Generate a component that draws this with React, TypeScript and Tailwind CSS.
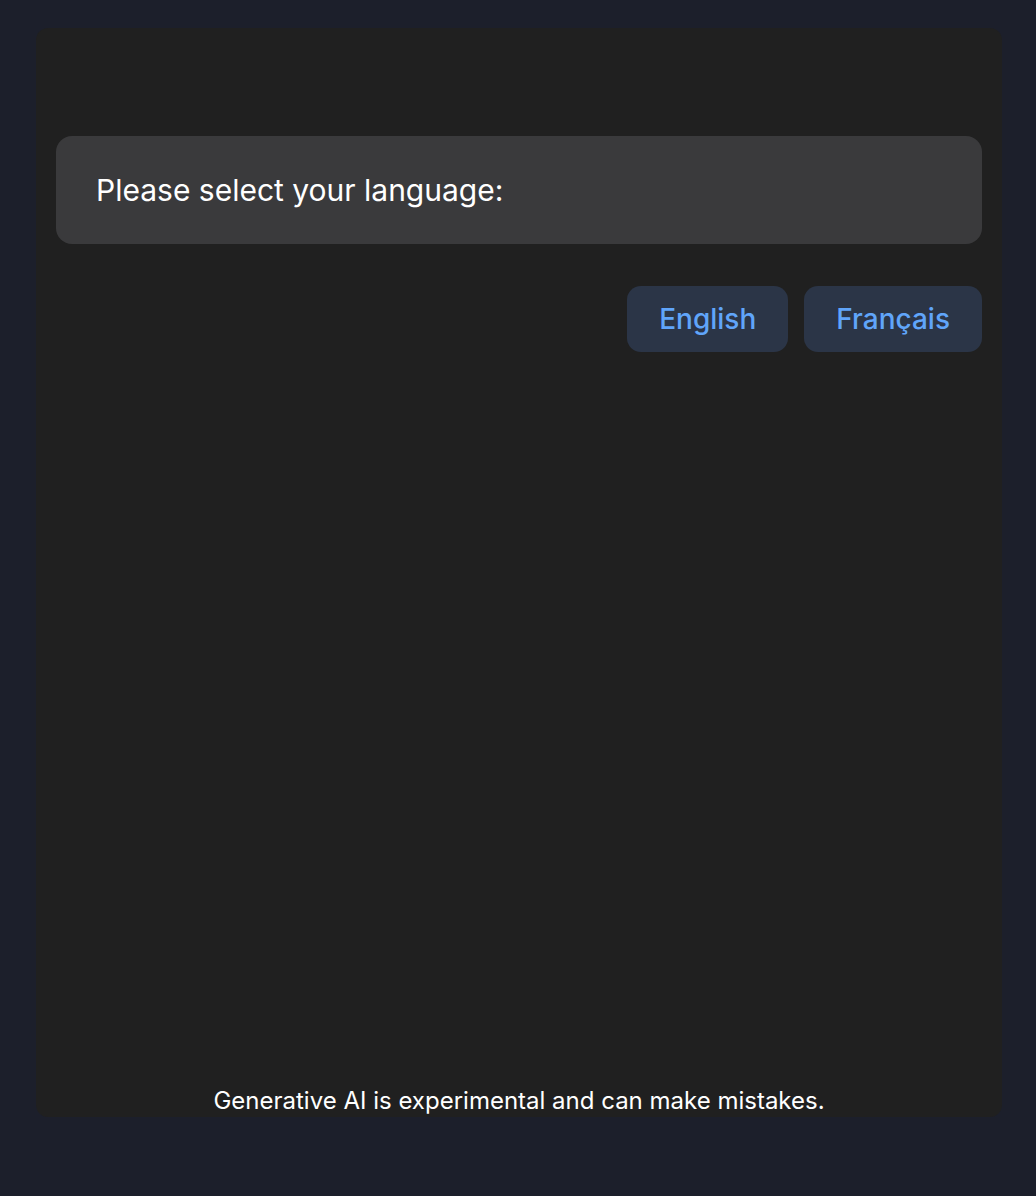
import { useState } from 'react'

const languages = ['English', 'Français']

export default function App() {
  const [selected, setSelected] = useState<string | null>(null)

  return (
    <div className="min-h-[1196px] bg-[#1c1f2b] pl-[36px] pr-[34px] pt-[28px] font-['Inter',sans-serif]">
      <div className="flex h-[1089px] flex-col rounded-[12px] bg-[#202020] px-[20px]">
        <div className="flex flex-1 flex-col pt-[108px]">
          <div className="flex h-[108px] items-center rounded-[16px] bg-[#3a3a3c] px-[40px]">
            <p className="text-[30px] text-white">Please select your language:</p>
          </div>

          <div className="mt-[42px] flex justify-end gap-[16px]">
            {languages.map((lang) => (
              <button
                key={lang}
                onClick={() => setSelected(lang)}
                className={`h-[66px] rounded-[14px] bg-[#2b3547] px-[32px] text-[28px] font-medium text-[#60a5fa] ${
                  selected === lang ? 'ring-1 ring-[#60a5fa]' : ''
                }`}
              >
                {lang}
              </button>
            ))}
          </div>
        </div>

        <p className="pb-[2px] text-center text-[24px] leading-[28px] text-white">
          Generative AI is experimental and can make mistakes.
        </p>
      </div>
    </div>
  )
}
